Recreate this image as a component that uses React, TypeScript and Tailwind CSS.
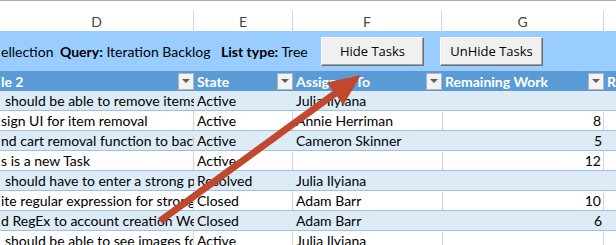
import React from 'react'

type Row = { title: string; pad: string; state: string; who: string; rem: string }

const ROWS: Row[] = [
  { title: 'should be able to remove items from the cart', pad: 'pl-[5px]', state: 'Active', who: 'Julia Ilyiana', rem: '' },
  { title: 'sign UI for item removal', pad: 'pl-[1px]', state: 'Active', who: 'Annie Herriman', rem: '8' },
  { title: 'nd cart removal function to backend', pad: 'pl-[1px]', state: 'Active', who: 'Cameron Skinner', rem: '5' },
  { title: 's is a new Task', pad: 'pl-[1px]', state: 'Active', who: '', rem: '12' },
  { title: 'should have to enter a strong password', pad: 'pl-[5px]', state: 'Resolved', who: 'Julia Ilyiana', rem: '' },
  { title: 'ite regular expression for strong password', pad: 'pl-[1px]', state: 'Closed', who: 'Adam Barr', rem: '10' },
  { title: 'd RegEx to account creation Web page', pad: 'pl-[1px]', state: 'Closed', who: 'Adam Barr', rem: '6' },
  { title: 'should be able to see images for products', pad: 'pl-[5px]', state: 'Active', who: 'Julia Ilyiana', rem: '' },
]

const COLS = 'grid grid-cols-[194px_99px_149px_162px_1fr]'

function Filter() {
  return (
    <span className="flex h-[17px] w-[16px] shrink-0 items-center justify-center border border-[#b4b4b4] bg-[#f3f3f3]">
      <svg width="8" height="4" viewBox="0 0 8 4">
        <path d="M0 0h8L4 4z" fill="#5f5f5f" />
      </svg>
    </span>
  )
}

function HeadCell({ label, filter = true }: { label: string; filter?: boolean }) {
  return (
    <div className="flex items-center justify-between overflow-hidden pl-[3px]">
      <span className="whitespace-nowrap">{label}</span>
      {filter && <Filter />}
    </div>
  )
}

function Button({ children }: { children: React.ReactNode }) {
  return (
    <button className="flex h-[29px] w-[103px] items-center justify-center border border-t-[#fdfdfd] border-l-[#fdfdfd] border-r-[#6f6f6f] border-b-[#6f6f6f] bg-[#f0f0f0] pt-[1px] font-['Open_Sans',sans-serif] text-[13px] text-black shadow-[inset_-1px_-1px_0_#a0a0a0]">
      {children}
    </button>
  )
}

export default function App() {
  return (
    <div className="relative h-[245px] w-[616px] overflow-hidden bg-white font-['Lato',sans-serif] text-[14px] text-black">
      {/* column letters */}
      <div className={`${COLS} h-[31px] border-t border-[#ababab] text-[#444]`}>
        {['D', 'E', 'F', 'G', ''].map((c, i) => (
          <div key={i} className={`mt-[10px] flex items-center justify-center ${i < 4 ? 'border-r border-[#d4d4d4]' : ''}`}>
            {c}
          </div>
        ))}
      </div>

      {/* team ribbon */}
      <div className="flex h-[40px] items-center bg-[#99ccff]">
        <div className="w-[60px] overflow-hidden whitespace-nowrap pl-[1px]">ellection</div>
        <div className="w-[161px] whitespace-nowrap">
          <b>Query:</b> Iteration Backlog
        </div>
        <div className="w-[100px] overflow-hidden whitespace-nowrap">
          <b>List type:</b> Tree
        </div>
        <div className="flex gap-[16px]">
          <Button>Hide Tasks</Button>
          <Button>UnHide Tasks</Button>
        </div>
      </div>

      {/* table header */}
      <div className={`${COLS} h-[20px] bg-[#5b9bd5] font-bold text-white`}>
        <div className="flex items-center justify-between overflow-hidden">
          <span className="whitespace-nowrap pl-[1px]">le 2</span>
          <Filter />
        </div>
        <HeadCell label="State" />
        <HeadCell label="Assigned To" />
        <HeadCell label="Remaining Work" />
        <HeadCell label="R" filter={false} />
      </div>

      {/* rows */}
      {ROWS.map((r, i) => {
        const band = i % 2 === 0
        const line = band ? '' : 'border-r border-[#d4d4d4]'
        return (
          <div key={i} className={`${COLS} h-[20px] border-b border-[#9bc2e6] ${band ? 'bg-[#ddebf7]' : 'bg-white'}`}>
            <div className={`overflow-hidden whitespace-nowrap leading-[19px] ${r.pad} ${line}`}>{r.title}</div>
            <div className={`overflow-hidden whitespace-nowrap pl-[3px] leading-[19px] ${line}`}>{r.state}</div>
            <div className={`overflow-hidden whitespace-nowrap pl-[3px] leading-[19px] ${band ? '' : ''}`}>{r.who}</div>
            <div className={`overflow-hidden whitespace-nowrap pr-[2px] text-right leading-[19px] ${line} ${band ? '' : 'border-l border-[#d4d4d4]'}`}>{r.rem}</div>
            <div />
          </div>
        )
      })}

      {/* red callout arrow */}
      <svg className="pointer-events-none absolute left-0 top-0" width="616" height="245" viewBox="0 0 616 245">
        <line x1="160" y1="221" x2="337" y2="92" stroke="#c0482f" strokeWidth="7" />
        <polygon points="361,75 343.3,105.1 326.9,82.5" fill="#c0482f" />
      </svg>
    </div>
  )
}
